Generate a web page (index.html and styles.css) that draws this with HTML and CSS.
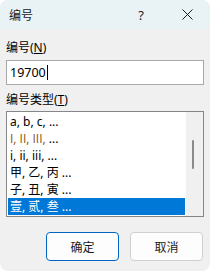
FILE: index.html
```html
<!DOCTYPE html>
<html lang="zh-CN">
<head>
    <meta charset="UTF-8">
    <title>编号</title>
    <link rel="stylesheet" href="styles.css">
</head>
<body>
    <div class="dialog">
        <div class="titlebar">
            <span class="title">编号</span>
            <span class="title-btn">?</span>
            <span class="title-btn">
                <svg width="11" height="11" viewBox="0 0 11 11">
                    <path d="M0.5 0.5 L10.5 10.5 M10.5 0.5 L0.5 10.5" stroke="#1b1b1b" stroke-width="1" fill="none"/>
                </svg>
            </span>
        </div>

        <div class="content">
            <div class="label label-first">编号(<u>N</u>)</div>
            <div class="textbox">19700<span class="caret"></span></div>

            <div class="label label-second">编号类型(<u>T</u>)</div>
            <div class="listbox">
                <ul class="items">
                    <li>a, b, c, ...</li>
                    <li><span class="roman">I, II, III,</span> ...</li>
                    <li>i, ii, iii, ...</li>
                    <li>甲, 乙, 丙 ...</li>
                    <li>子, 丑, 寅 ...</li>
                    <li class="selected">壹, 贰, 叁 ...</li>
                </ul>
                <div class="scrollbar"><div class="thumb"></div></div>
            </div>

            <div class="buttons">
                <button class="btn btn-default">确定</button>
                <button class="btn">取消</button>
            </div>
        </div>
    </div>
</body>
</html>
```

FILE: styles.css
```css
body {
    margin: 0;
    background-color: #ffffff;
    font-family: "Noto Sans", "Noto Sans CJK SC", sans-serif;
    font-size: 12px;
    color: #000;
}
.dialog {
    width: 210px;
    height: 271px;
    background-color: #f0f0f0;
    border-radius: 8px;
    overflow: hidden;
    display: flex;
    flex-direction: column;
}
.titlebar {
    height: 29px;
    background-color: #e9f3f6;
    display: flex;
    align-items: center;
}
.title {
    flex: 1;
    padding-left: 9px;
    font-size: 12px;
    color: #1a1a1a;
}
.title-btn {
    width: 46px;
    height: 29px;
    display: flex;
    align-items: center;
    justify-content: center;
    font-family: "Noto Sans", sans-serif;
    font-size: 13px;
    color: #1a1a1a;
}
.content {
    padding: 0 6px;
}
.label {
    line-height: 16px;
    height: 16px;
}
.label-first {
    margin-top: 11px;
}
.label-second {
    margin-top: 7px;
}
.textbox {
    margin-top: 4px;
    height: 25px;
    box-sizing: border-box;
    border: 1px solid #a8a8a8;
    background-color: #fff;
    padding-left: 3px;
    line-height: 23px;
    font-size: 12.5px;
    display: flex;
    align-items: center;
}
.caret {
    display: inline-block;
    width: 1px;
    height: 15px;
    background-color: #000;
    margin-left: 1px;
}
.listbox {
    margin-top: 3px;
    height: 106px;
    box-sizing: border-box;
    border: 1px solid #86868a;
    background-color: #fff;
    display: flex;
}
.items {
    list-style: none;
    margin: 0;
    padding: 1px 1px 0 1px;
    flex: 1;
}
.items li {
    height: 17px;
    line-height: 17px;
    padding-left: 2px;
    white-space: nowrap;
}
.roman {
    font-family: "Open Sans", sans-serif;
    color: #8a5212;
}
.items li.selected {
    background-color: #0078d7;
    color: #fff;
}
.scrollbar {
    width: 17px;
    background-color: #f0f0f0;
    position: relative;
}
.thumb {
    position: absolute;
    left: 6px;
    top: 28px;
    width: 2px;
    height: 29px;
    border-radius: 1px;
    background-color: #8a8a8a;
}
.buttons {
    margin-top: 15px;
    display: flex;
    justify-content: flex-end;
    gap: 11px;
    padding-right: 1px;
}
.btn {
    width: 73px;
    height: 29px;
    border: 1px solid #d0d0d0;
    border-radius: 4px;
    background-color: #fdfdfd;
    font-family: "Noto Sans CJK SC", sans-serif;
    font-size: 12px;
    color: #1a1a1a;
    padding: 0;
}
.btn-default {
    border-color: #0067c0;
}
```
